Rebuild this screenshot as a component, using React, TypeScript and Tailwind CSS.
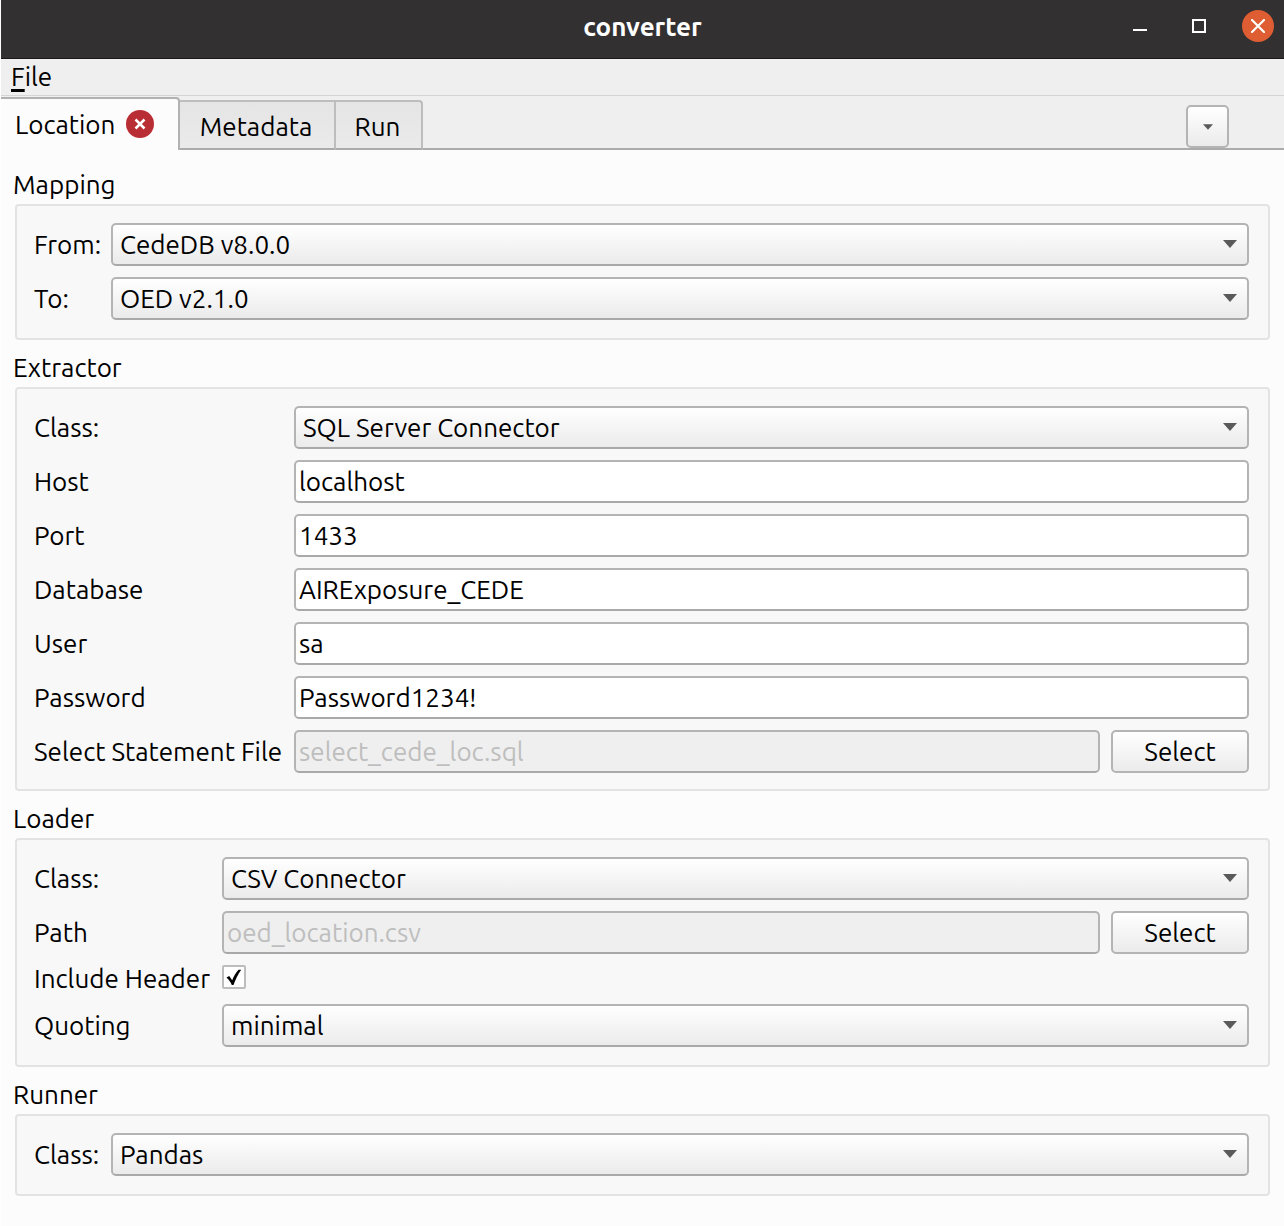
import { useId, useState } from "react";
import type { ReactNode } from "react";

const field =
  "h-[43px] w-full min-w-0 rounded-[5px] border-2 border-[#b4b4b4] border-b-[#a9a9a9]";
const raised = "bg-linear-to-b from-white to-[#ebebeb]";

function Arrow({ className }: { className: string }) {
  return (
    <svg viewBox="0 0 14 8" className={className} aria-hidden="true">
      <path d="M0 0h14L7 8z" fill="#5a5a5a" />
    </svg>
  );
}

function Group({ title, cols, pad, children }: { title: string; cols: string; pad: string; children: ReactNode }) {
  return (
    <section>
      <h2 className="flex h-[47px] items-center pt-2 -ml-0.5">{title}</h2>
      <div className={`grid items-center gap-[11px] rounded-[4px] border-2 border-[#e3e3e3] bg-[#f8f8f8] pl-[17px] pr-[19px] pt-[17px] ${pad} ${cols}`}>
        {children}
      </div>
    </section>
  );
}

function SelectRow({ label, options }: { label: string; options: string[] }) {
  const id = useId();
  return (
    <>
      <label htmlFor={id} className="whitespace-nowrap">{label}</label>
      <div className="relative">
        <select id={id} className={`${field} ${raised} block appearance-none pl-[7px] pr-12`}>
          {options.map((o) => (
            <option key={o}>{o}</option>
          ))}
        </select>
        <Arrow className="pointer-events-none absolute right-3 top-[17px] h-2 w-3.5" />
      </div>
    </>
  );
}

function TextRow({ label, value }: { label: string; value: string }) {
  const id = useId();
  return (
    <>
      <label htmlFor={id} className="whitespace-nowrap">{label}</label>
      <input id={id} type="text" defaultValue={value} className={`${field} bg-white px-[3px]`} />
    </>
  );
}

function FileRow({ label, value }: { label: string; value: string }) {
  const id = useId();
  return (
    <>
      <label htmlFor={id} className="whitespace-nowrap">{label}</label>
      <div className="flex gap-[11px]">
        <input id={id} type="text" disabled defaultValue={value} className={`${field} bg-[#efefef] px-[3px] text-[#bebebe]`} />
        <button type="button" className={`h-[43px] w-[138px] shrink-0 rounded-[5px] border-2 border-[#b4b4b4] ${raised}`}>
          Select
        </button>
      </div>
    </>
  );
}

function CheckRow({ label }: { label: string }) {
  const id = useId();
  const [on, setOn] = useState(true);
  return (
    <>
      <label htmlFor={id} className="flex h-7 items-center whitespace-nowrap">{label}</label>
      <div className="relative h-7">
        <input
          id={id}
          type="checkbox"
          checked={on}
          onChange={(e) => setOn(e.target.checked)}
          className="peer block size-6 appearance-none rounded-[2px] border-2 border-[#bdbdbd] bg-white"
        />
        <svg viewBox="0 0 24 24" className="pointer-events-none invisible absolute left-0 top-0 size-6 peer-checked:visible" aria-hidden="true">
          <path d="M4.5 12.5 7.2 11l3 4.2C11.8 11 14 7.500 16.500 4.800h2.700C16 9.500 13.500 14.500 11.500 20H9.800C8.500 17 7 14.700 4.500 12.500z" fill="#000" />
        </svg>
      </div>
    </>
  );
}

export default function App() {
  return (
    <div className="min-h-screen border-l border-white bg-[#fcfcfc] font-['Ubuntu','Noto_Sans',sans-serif] text-[26px] leading-[32px] text-black">
      <header className="grid h-[59px] grid-cols-[1fr_auto_1fr] items-center border-b border-[#191717] bg-[#333031] text-white">
        <h1 className="col-start-2 pb-1 font-bold">converter</h1>
        <div className="flex items-center justify-end gap-[27px] pb-1.5 pr-2.5">
          <button type="button" aria-label="Minimize" className="flex h-8 w-8 items-center justify-center">
            <svg viewBox="0 0 14 14" className="size-3.5" aria-hidden="true">
              <path d="M0 11h14" stroke="#fff" strokeWidth="2" />
            </svg>
          </button>
          <button type="button" aria-label="Maximize" className="flex h-8 w-8 items-center justify-center">
            <svg viewBox="0 0 14 14" className="size-3.5" aria-hidden="true">
              <path d="M1 1h12v12H1z" fill="none" stroke="#fff" strokeWidth="2" />
            </svg>
          </button>
          <button type="button" aria-label="Close" className="flex size-8 items-center justify-center rounded-full bg-[#de5d33]">
            <svg viewBox="0 0 14 14" className="size-3.5" aria-hidden="true">
              <path d="M1 1l12 12M13 1L1 13" stroke="#fff" strokeWidth="2.200" strokeLinecap="round" />
            </svg>
          </button>
        </div>
      </header>

      <nav className="flex h-[37px] items-center border-b border-[#d5d5d5] bg-[#efefef] px-2.5">
        <button type="button">
          <span className="underline decoration-[3px] underline-offset-[3px]">F</span>ile
        </button>
      </nav>

      <div className="flex h-[54px] bg-[#efefef]">
        <div role="tablist" className="flex">
          <div className="mt-px flex w-[179px] items-center rounded-tr-[4px] border-r-2 border-t-2 border-[#b2b2b2] bg-[#fcfcfc] pl-3.5">
            <button type="button" role="tab" aria-selected="true">Location</button>
            <button type="button" aria-label="Close Location" className="mb-0.5 ml-auto mr-6 flex size-7 items-center justify-center rounded-full bg-[#b92d35]">
              <svg viewBox="0 0 12 12" className="size-3" aria-hidden="true">
                <path d="M1.500 1.500l9 9M10.500 1.500l-9 9" stroke="#fff" strokeWidth="2.500" />
              </svg>
            </button>
          </div>
          <button type="button" role="tab" aria-selected="false" className="mt-1 w-[156px] border-b-2 border-r-2 border-t-2 border-[#bdbdbd] border-b-[#ababab] bg-linear-to-b from-[#e5e5e5] to-[#eaeaea] pr-0.5 pt-1">
            Metadata
          </button>
          <button type="button" role="tab" aria-selected="false" className="mt-1 w-[87px] rounded-tr-[4px] border-b-2 border-r-2 border-t-2 border-[#bdbdbd] border-b-[#ababab] bg-linear-to-b from-[#e5e5e5] to-[#eaeaea] pr-0.5 pt-1">
            Run
          </button>
        </div>
        <div className="flex flex-1 items-end justify-end border-b-2 border-[#ababab] pr-[55px]">
          <button type="button" aria-label="List tabs" className={`flex size-[43px] items-center justify-center rounded-[5px] border-2 border-[#b4b4b4] ${raised}`}>
            <Arrow className="h-[6px] w-[10px]" />
          </button>
        </div>
      </div>

      <main className="pb-7 pl-3.5 pr-3.5 pt-[7px]">
        <Group title="Mapping" cols="grid-cols-[66px_minmax(0,1fr)]" pad="pb-[18px]">
          <SelectRow label="From:" options={["CedeDB v8.0.0"]} />
          <SelectRow label="To:" options={["OED v2.1.0"]} />
        </Group>
        <Group title="Extractor" cols="grid-cols-[249px_minmax(0,1fr)]" pad="pb-4">
          <SelectRow label="Class:" options={["SQL Server Connector"]} />
          <TextRow label="Host" value="localhost" />
          <TextRow label="Port" value="1433" />
          <TextRow label="Database" value="AIRExposure_CEDE" />
          <TextRow label="User" value="sa" />
          <TextRow label="Password" value="Password1234!" />
          <FileRow label="Select Statement File" value="select_cede_loc.sql" />
        </Group>
        <Group title="Loader" cols="grid-cols-[177px_minmax(0,1fr)]" pad="pb-[18px]">
          <SelectRow label="Class:" options={["CSV Connector"]} />
          <FileRow label="Path" value="oed_location.csv" />
          <CheckRow label="Include Header" />
          <SelectRow label="Quoting" options={["minimal"]} />
        </Group>
        <Group title="Runner" cols="grid-cols-[66px_minmax(0,1fr)]" pad="pb-[18px]">
          <SelectRow label="Class:" options={["Pandas"]} />
        </Group>
      </main>
    </div>
  );
}
